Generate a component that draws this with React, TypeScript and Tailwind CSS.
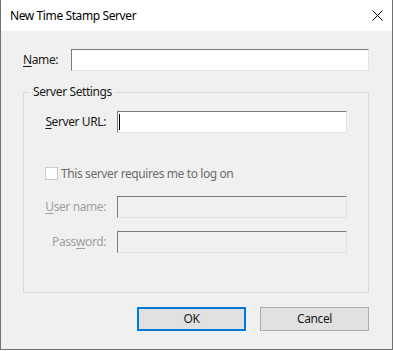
import React from "react";

const font = { fontFamily: '"Noto Sans", "Open Sans", sans-serif' };

function Field({ disabled, caret }: { disabled?: boolean; caret?: boolean }) {
  return (
    <div
      className={`relative h-[22px] w-[230px] border border-t-[#7a7a7a] border-l-[#7a7a7a] border-r-[#e3e3e3] border-b-[#e3e3e3] ${
        disabled ? "bg-[#f0f0f0]" : "bg-white"
      }`}
    >
      {caret && <div className="absolute left-[1px] top-[2px] h-[16px] w-px bg-black" />}
    </div>
  );
}

export default function App() {
  return (
    <div className="h-[351px] w-[393px] bg-white text-[12px] tracking-[-0.4px] text-[#1a1a1a]" style={font}>
      <div className="flex h-[350px] w-[393px] flex-col border-x border-b border-[#707070]">
        {/* Title bar */}
        <div className="flex h-[31px] items-center justify-between bg-white pl-[9px] pr-[9px]">
          <span className="text-[12px] leading-none text-black">New Time Stamp Server</span>
          <svg width="11" height="11" viewBox="0 0 11 11" className="text-black">
            <path d="M0.5 0.5 L10.5 10.5 M10.5 0.5 L0.5 10.5" stroke="currentColor" strokeWidth="1" />
          </svg>
        </div>

        {/* Body */}
        <div className="flex flex-1 flex-col bg-[#f0f0f0] pl-[22px]">
          {/* Name row */}
          <div className="mt-[18px] flex h-[22px] items-center">
            <span className="w-[48px] whitespace-nowrap">
              <u className="underline-offset-2">N</u>ame:
            </span>
            <div className="h-[22px] w-[298px] border border-t-[#7a7a7a] border-l-[#7a7a7a] border-r-[#e3e3e3] border-b-[#e3e3e3] bg-white" />
          </div>

          {/* Group box */}
          <div className="relative mt-[21px] h-[201px] w-[346px] border border-[#dcdcdc]">
            <span className="absolute left-[6px] top-[-9px] whitespace-nowrap bg-[#f0f0f0] px-[3px] leading-[16px]">
              Server Settings
            </span>
            <div className="flex flex-col pl-[8px]">
              <div className="mt-[18px] flex items-center">
                <span className="w-[74px] whitespace-nowrap text-right">
                  <u className="underline-offset-2">S</u>erver URL:
                </span>
                <div className="ml-[11px]">
                  <Field caret />
                </div>
              </div>

              <div className="ml-[13px] mt-[34px] flex h-[13px] items-center">
                <div className="h-[13px] w-[13px] border border-[#cccccc] bg-white" />
                <span className="ml-[3px] whitespace-nowrap text-[#6d6d6d]">This server requires me to log on</span>
              </div>

              <div className="mt-[16px] flex items-center">
                <span className="w-[74px] whitespace-nowrap text-right text-[#a0a0a0]">
                  <u className="underline-offset-2">U</u>ser name:
                </span>
                <div className="ml-[11px]">
                  <Field disabled />
                </div>
              </div>

              <div className="mt-[13px] flex items-center">
                <span className="w-[74px] whitespace-nowrap text-right text-[#a0a0a0]">
                  Pass<u className="underline-offset-2">w</u>ord:
                </span>
                <div className="ml-[11px]">
                  <Field disabled />
                </div>
              </div>
            </div>
          </div>

          {/* Buttons */}
          <div className="mt-[14px] flex w-[346px] justify-end gap-[14px]">
            <div className="flex h-[24px] w-[109px] items-center justify-center border-2 border-[#0078d7] bg-[#e1e1e1]">
              OK
            </div>
            <div className="flex h-[24px] w-[109px] items-center justify-center border border-[#adadad] bg-[#e1e1e1]">
              Cancel
            </div>
          </div>
        </div>
      </div>
    </div>
  );
}
